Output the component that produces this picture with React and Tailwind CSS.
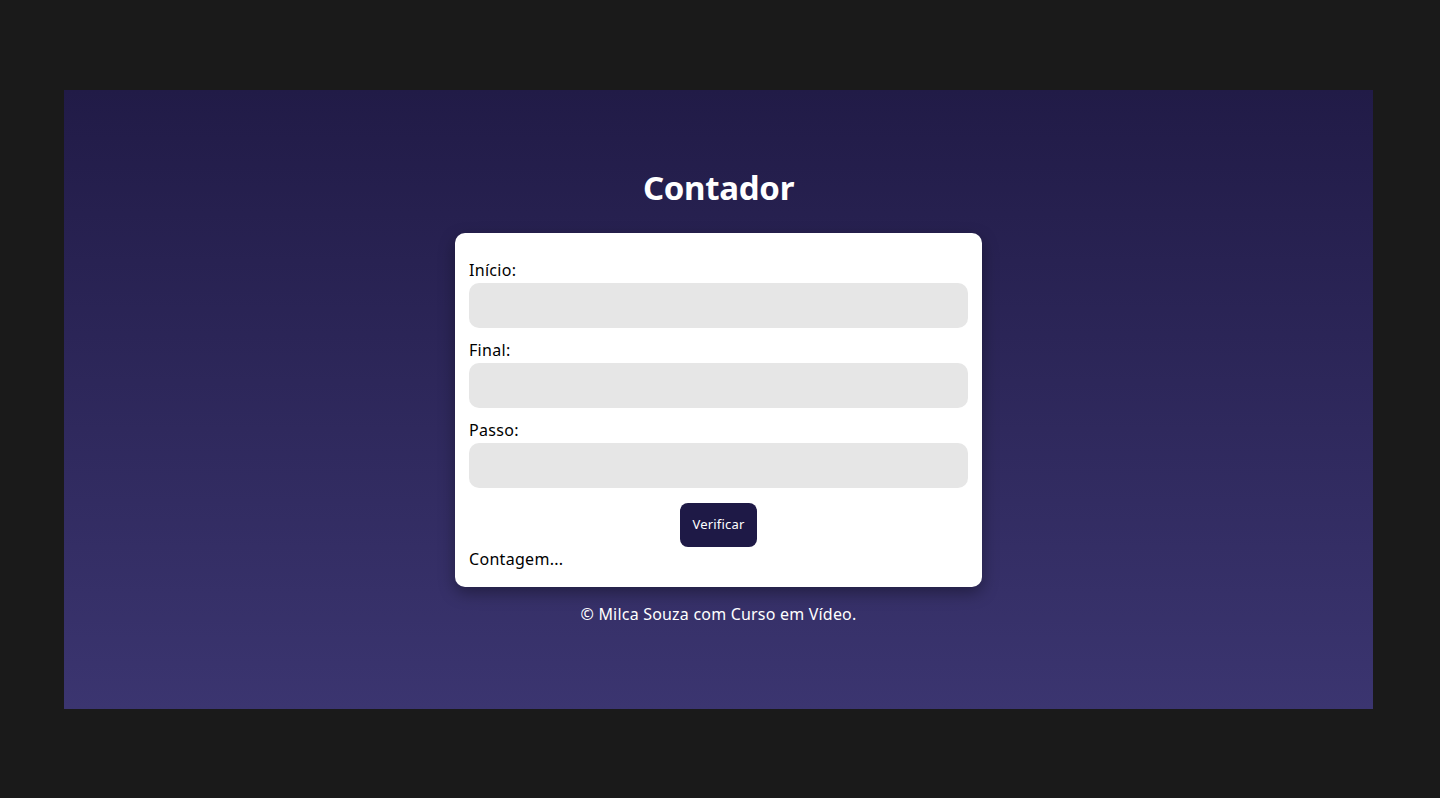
import React, { useState } from 'react';

const Field = ({ label, value, onChange }) => (
  <div className="mb-[10px]">
    <label className="block text-[16px] leading-[25px] text-black tracking-[0.3px]">{label}</label>
    <input
      type="number"
      value={value}
      onChange={(e) => onChange(e.target.value)}
      className="block w-full h-[45px] rounded-[10px] bg-[#e6e6e6] px-3 outline-none"
    />
  </div>
);

const App = () => {
  const [inicio, setInicio] = useState('');
  const [fim, setFim] = useState('');
  const [passo, setPasso] = useState('');
  const [resultado, setResultado] = useState('Contagem...');

  const contar = () => {
    const i = Number(inicio);
    const f = Number(fim);
    let p = Number(passo) || 1;
    if (inicio === '' || fim === '') {
      setResultado('Impossível contar!');
      return;
    }
    const out = [];
    if (i <= f) for (let c = i; c <= f; c += p) out.push(c);
    else for (let c = i; c >= f; c -= p) out.push(c);
    setResultado(out.join(' 👉 ') + ' 🏁');
  };

  return (
    <div
      className="min-h-screen w-full bg-[#1a1a1a] pt-[90px] pl-[64px]"
      style={{ fontFamily: '"Noto Sans", Inter, sans-serif' }}
    >
      <div className="w-[1309px] h-[619px] bg-gradient-to-b from-[#211b47] to-[#3b3570] flex flex-col items-center pt-[74px]">
        <h1 className="text-white text-[33px] leading-[48px] font-bold tracking-[-0.3px]">Contador</h1>
        <div className="mt-[21px] w-[527px] bg-white rounded-[10px] px-[14px] pt-[25px] pb-[15px] shadow-[0_6px_16px_rgba(0,0,0,0.35)]">
          <Field label="Início:" value={inicio} onChange={setInicio} />
          <Field label="Final:" value={fim} onChange={setFim} />
          <Field label="Passo:" value={passo} onChange={setPasso} />
          <div className="flex justify-center mt-[15px]">
            <button
              onClick={contar}
              className="w-[77px] h-[44px] rounded-[8px] bg-[#1e1946] text-white text-[13px] tracking-[0.2px]"
            >
              Verificar
            </button>
          </div>
          <div className="text-[16px] leading-[25px] text-black tracking-[0.3px]">{resultado}</div>
        </div>
        <p className="mt-[15px] text-white text-[16px] leading-[24px] tracking-[0.2px]">© Milca Souza com Curso em Vídeo.</p>
      </div>
    </div>
  );
};

export default App;
